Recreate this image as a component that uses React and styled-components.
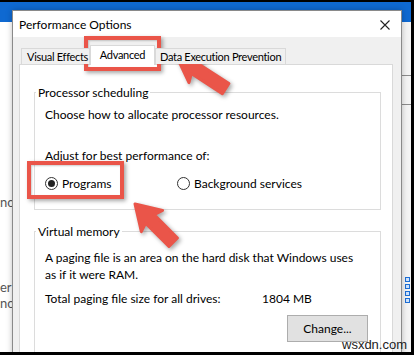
import React from "react";
import styled, { createGlobalStyle } from "styled-components";

const GlobalStyle = createGlobalStyle`
  html, body {
    margin: 0;
    padding: 0;
    background: #fff;
  }
  body {
    width: 414px;
    height: 355px;
    overflow: hidden;
  }
`;

const UI = `"Segoe UI", Lato, "Noto Sans", sans-serif`;
const RED = "#ea5549";

const Screen = styled.div`
  position: relative;
  width: 414px;
  height: 355px;
  overflow: hidden;
  background: #fff;
  font-family: ${UI};
  color: #1a1a1a;
`;

/* window behind the dialog */
const BackWindow = styled.div`
  position: absolute;
  inset: 0;
  display: flex;
  flex-direction: column;
`;
const BackTitle = styled.div`
  height: 20px;
  margin-top: 2px;
  background: #0f69d1;
  flex-shrink: 0;
`;
const BackBody = styled.div`
  flex: 1;
  display: flex;
  justify-content: space-between;
`;
const BackLeft = styled.div`
  width: 14px;
  padding-top: 172px;
  display: flex;
  flex-direction: column;
  font-size: 13px;
  line-height: 16px;
  color: #555;
`;
const Fragment = styled.span`
  margin-top: ${(p) => p.$gap || 0}px;
  white-space: nowrap;
`;
const BackRight = styled.div`
  width: 13px;
  background: #f4f4f4;
  display: flex;
  flex-direction: column;
`;
const OutlineBox = styled.div`
  margin-top: 53px;
  height: 30px;
  border: 1px solid #8c8c8c;
  border-right: none;
  box-sizing: border-box;
`;
const Dots = styled.div`
  margin: 172px 0 0 4px;
  display: flex;
  flex-direction: column;
  gap: 2px;
`;
const Dot = styled.div`
  width: 5px;
  height: 5px;
  box-sizing: border-box;
  border: 1.5px solid #1d6fd6;
  background: #cfe2fb;
`;

/* dialog */
const Dialog = styled.div`
  position: absolute;
  left: 12px;
  top: 10px;
  width: 390px;
  height: 360px;
  box-sizing: border-box;
  border: 1px solid #8a8a8a;
  background: #f0f0f0;
  box-shadow: 0 0 6px rgba(0, 0, 0, 0.25);
  display: flex;
  flex-direction: column;
`;
const TitleBar = styled.div`
  height: 25px;
  flex-shrink: 0;
  background: #fff;
  display: flex;
  align-items: center;
  justify-content: space-between;
  padding: 1px 11px 0 6px;
  font-size: 12px;
  color: #000;
`;
const Body = styled.div`
  flex: 1;
  display: flex;
  flex-direction: column;
  padding: 8px 8px 0 6px;
`;
const TabRow = styled.div`
  height: 20px;
  display: flex;
  align-items: flex-end;
  padding-left: 2px;
  margin-bottom: -1px;
  position: relative;
  z-index: 1;
`;
const Tab = styled.div`
  width: ${(p) => p.$w}px;
  height: ${(p) => (p.$active ? 20 : 16)}px;
  margin-bottom: ${(p) => (p.$active ? 0 : 1)}px;
  box-sizing: border-box;
  border: 1px solid #d9d9d9;
  border-bottom: none;
  background: ${(p) => (p.$active ? "#fff" : "#f0f0f0")};
  font-size: 11px;
  letter-spacing: -0.3px;
  line-height: ${(p) => (p.$active ? 18 : 15)}px;
  padding-left: ${(p) => p.$pad || 0}px;
  text-align: ${(p) => (p.$active ? "center" : "left")};
  white-space: nowrap;
  overflow: hidden;
  color: #000;
`;
const Panel = styled.div`
  flex: 1;
  background: #fff;
  border: 1px solid #d9d9d9;
  padding: 20px 11px 0 14px;
`;
const Group = styled.fieldset`
  margin: ${(p) => p.$top || 0}px 0 0 0;
  padding: 0;
  min-width: 0;
  border: 1px solid #dcdcdc;
`;
const Legend = styled.legend`
  margin-left: 1px;
  padding: 0 2px;
  font-size: 12px;
  line-height: 15px;
  color: #000;
`;
const GroupBody = styled.div`
  padding: ${(p) => p.$pad};
  font-size: 12px;
  line-height: 15px;
  color: #000;
`;
const Line = styled.div`
  margin-top: ${(p) => p.$top || 0}px;
  line-height: ${(p) => p.$lh || 15}px;
`;
const RadioRow = styled.div`
  margin-top: 13px;
  height: 15px;
  display: flex;
  align-items: center;
`;
const RadioItem = styled.label`
  width: ${(p) => p.$w}px;
  display: flex;
  align-items: center;
  gap: 4px;
`;
const RadioCircle = styled.span`
  width: 13px;
  height: 13px;
  box-sizing: border-box;
  border: 1px solid #333;
  border-radius: 50%;
  display: flex;
  align-items: center;
  justify-content: center;
  &::after {
    content: "";
    width: 7px;
    height: 7px;
    border-radius: 50%;
    background: ${(p) => (p.$on ? "#222" : "transparent")};
  }
`;
const SizeRow = styled.div`
  margin-top: 8px;
  display: flex;
`;
const SizeLabel = styled.span`
  width: 217px;
`;
const ButtonRow = styled.div`
  margin-top: 9px;
  display: flex;
  justify-content: flex-end;
`;
const Button = styled.button`
  width: 81px;
  height: 27px;
  background: #e1e1e1;
  border: 1px solid #adadad;
  font-family: ${UI};
  font-size: 12px;
  color: #000;
  padding: 0;
`;

/* annotations */
const RedBox = styled.div`
  position: absolute;
  left: ${(p) => p.$x}px;
  top: ${(p) => p.$y}px;
  width: ${(p) => p.$w}px;
  height: ${(p) => p.$h}px;
  box-sizing: border-box;
  border: 4px solid ${RED};
  box-shadow: 2px 2px 4px rgba(0, 0, 0, 0.35), inset 1px 1px 2px rgba(0, 0, 0, 0.2);
`;
const Overlay = styled.svg`
  position: absolute;
  left: 0;
  top: 0;
  pointer-events: none;
  filter: drop-shadow(2px 2px 2px rgba(0, 0, 0, 0.35));
`;
const Watermark = styled.div`
  position: absolute;
  left: 342px;
  top: 337px;
  font-family: "Liberation Sans", Arial, sans-serif;
  font-size: 13px;
  line-height: 15px;
  color: #222;
`;
const Frame = styled.div`
  position: absolute;
  inset: 0;
  border-top: 2px solid #000;
  border-right: 3px solid #000;
  border-bottom: 3px solid #000;
  pointer-events: none;
`;

const Arrow = ({ x, y, angle, len, head = 24, width = 30, shaft = 12 }) => {
  const h = shaft / 2;
  const w = width / 2;
  const d = `M0,0 L${head},${-w} L${head - 3},${-h} L${len},${-h} L${len},${h} L${head - 3},${h} L${head},${w} Z`;
  return (
    <path
      d={d}
      fill={RED}
      stroke={RED}
      strokeWidth="3"
      strokeLinejoin="round"
      transform={`translate(${x} ${y}) rotate(${angle})`}
    />
  );
};

const CloseIcon = () => (
  <svg width="10" height="10" viewBox="0 0 10 10">
    <path d="M0.5 0.5 L9.5 9.5 M9.5 0.5 L0.5 9.5" stroke="#222" strokeWidth="1.1" />
  </svg>
);

export default function App() {
  return (
    <>
      <GlobalStyle />
      <Screen>
        <BackWindow>
          <BackTitle />
          <BackBody>
            <BackLeft>
              <Fragment>no</Fragment>
              <Fragment $gap={69}>er</Fragment>
              <Fragment>no</Fragment>
            </BackLeft>
            <BackRight>
              <OutlineBox />
              <Dots>
                <Dot />
                <Dot />
                <Dot />
                <Dot />
              </Dots>
            </BackRight>
          </BackBody>
        </BackWindow>

        <Dialog>
          <TitleBar>
            <span>Performance Options</span>
            <CloseIcon />
          </TitleBar>
          <Body>
            <TabRow>
              <Tab $w={69} $pad={5}>Visual Effects</Tab>
              <Tab $w={65} $active>Advanced</Tab>
              <Tab $w={131} $pad={4}>Data Execution Prevention</Tab>
            </TabRow>
            <Panel>
              <Group>
                <Legend>Processor scheduling</Legend>
                <GroupBody $pad="7px 10px 18px 10px">
                  <Line>Choose how to allocate processor resources.</Line>
                  <Line $top={26}>Adjust for best performance of:</Line>
                  <RadioRow>
                    <RadioItem $w={132}>
                      <RadioCircle $on />
                      Programs
                    </RadioItem>
                    <RadioItem>
                      <RadioCircle />
                      Background services
                    </RadioItem>
                  </RadioRow>
                </GroupBody>
              </Group>
              <Group $top={14}>
                <Legend>Virtual memory</Legend>
                <GroupBody $pad="10px 12px 20px 10px">
                  <Line $lh={17}>
                    A paging file is an area on the hard disk that Windows uses
                    <br />
                    as if it were RAM.
                  </Line>
                  <SizeRow>
                    <SizeLabel>Total paging file size for all drives:</SizeLabel>
                    <span>1804 MB</span>
                  </SizeRow>
                  <ButtonRow>
                    <Button>Change...</Button>
                  </ButtonRow>
                </GroupBody>
              </Group>
            </Panel>
          </Body>
        </Dialog>

        <RedBox $x={84} $y={36} $w={77} $h={35} />
        <RedBox $x={27} $y={161} $w={97} $h={38} />
        <Overlay width="414" height="355">
          <Arrow x={177} y={57} angle={33} len={58} />
          <Arrow x={135} y={204} angle={45} len={54} />
        </Overlay>

        <Watermark>wsxdn.com</Watermark>
        <Frame />
      </Screen>
    </>
  );
}
